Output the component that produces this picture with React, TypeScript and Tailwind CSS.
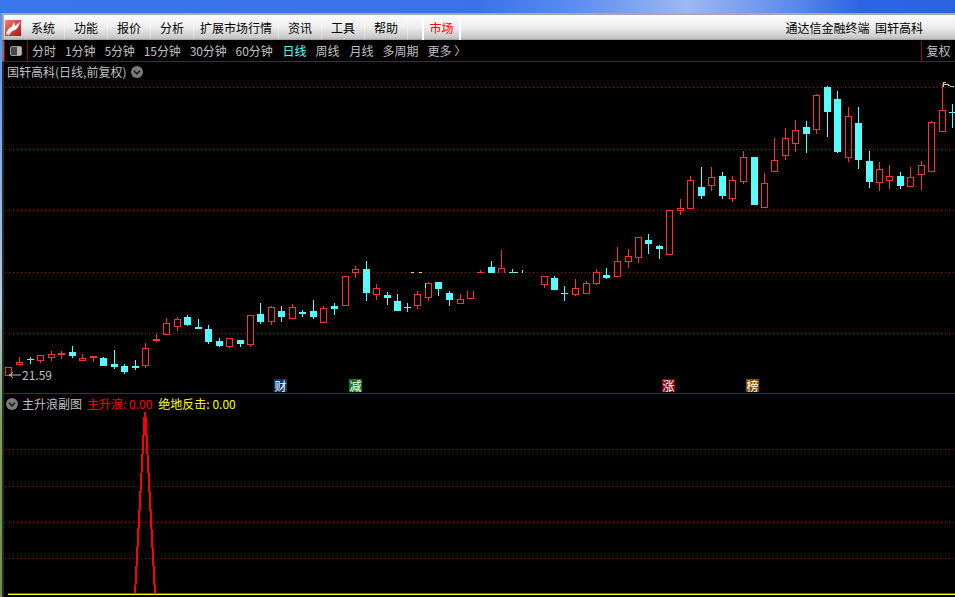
const RED = '#ff3232';
const CYAN = '#54ffff';
const GRID = '#a01010';

const MENU = ['系统', '功能', '报价', '分析', '扩展市场行情', '资讯', '工具', '帮助'];
const PERIODS = ['分时', '1分钟', '5分钟', '15分钟', '30分钟', '60分钟', '日线', '周线', '月线', '多周期', '更多 〉'];

type Candle = [number, number, number, number, number, 'r' | 'c'];

// x, high, low, body top, body bottom, colour (page coordinates)
const CANDLES: Candle[] = [
  [8, 367, 376, 367, 376, 'r'],
  [19, 357, 365, 362, 365, 'r'],
  [30, 357, 364, 359, 360, 'c'],
  [40, 355, 363, 355, 361, 'r'],
  [51, 351, 361, 354, 358, 'r'],
  [61, 351, 359, 353, 354, 'r'],
  [72, 346, 358, 352, 356, 'c'],
  [82, 354, 361, 358, 361, 'r'],
  [93, 356, 362, 356, 358, 'r'],
  [103, 357, 366, 358, 366, 'c'],
  [114, 350, 369, 364, 367, 'c'],
  [124, 364, 374, 366, 372, 'c'],
  [135, 360, 370, 366, 368, 'c'],
  [145, 343, 368, 348, 366, 'r'],
  [156, 334, 342, 339, 341, 'r'],
  [166, 318, 335, 323, 335, 'r'],
  [177, 317, 331, 319, 327, 'r'],
  [187, 315, 326, 317, 325, 'c'],
  [198, 319, 329, 327, 329, 'c'],
  [208, 325, 344, 329, 342, 'c'],
  [219, 338, 347, 341, 346, 'c'],
  [229, 338, 348, 338, 347, 'r'],
  [240, 340, 347, 340, 344, 'c'],
  [250, 315, 347, 315, 345, 'r'],
  [260, 303, 324, 314, 322, 'c'],
  [271, 306, 325, 307, 322, 'r'],
  [281, 306, 322, 311, 317, 'c'],
  [292, 304, 319, 307, 319, 'r'],
  [302, 310, 317, 312, 314, 'c'],
  [313, 300, 319, 311, 317, 'c'],
  [323, 306, 323, 308, 323, 'r'],
  [334, 303, 315, 306, 309, 'c'],
  [345, 276, 306, 276, 306, 'r'],
  [355, 266, 278, 269, 273, 'r'],
  [366, 261, 301, 269, 293, 'c'],
  [376, 284, 300, 288, 295, 'r'],
  [387, 292, 305, 295, 298, 'c'],
  [397, 294, 311, 301, 311, 'c'],
  [407, 303, 312, 307, 308, 'c'],
  [417, 291, 309, 294, 306, 'r'],
  [428, 282, 301, 283, 298, 'r'],
  [438, 282, 296, 282, 289, 'c'],
  [449, 291, 306, 293, 300, 'c'],
  [460, 294, 304, 299, 304, 'r'],
  [491, 261, 273, 267, 273, 'c'],
  [544, 276, 288, 276, 285, 'r'],
  [554, 276, 290, 278, 290, 'c'],
  [564, 286, 301, 293, 294, 'c'],
  [575, 279, 296, 288, 295, 'r'],
  [586, 281, 294, 283, 294, 'r'],
  [596, 269, 285, 272, 284, 'r'],
  [606, 268, 279, 275, 278, 'c'],
  [617, 247, 277, 261, 277, 'r'],
  [628, 249, 268, 256, 262, 'r'],
  [638, 237, 263, 237, 258, 'r'],
  [648, 234, 254, 240, 244, 'c'],
  [659, 245, 259, 246, 249, 'c'],
  [669, 210, 255, 210, 255, 'r'],
  [680, 199, 215, 208, 211, 'r'],
  [690, 176, 209, 180, 209, 'r'],
  [701, 167, 199, 187, 196, 'c'],
  [711, 167, 191, 177, 186, 'r'],
  [722, 172, 199, 176, 196, 'c'],
  [732, 176, 202, 180, 199, 'r'],
  [743, 151, 184, 157, 182, 'r'],
  [754, 157, 205, 157, 205, 'c'],
  [764, 173, 208, 183, 208, 'r'],
  [774, 138, 172, 160, 172, 'r'],
  [785, 128, 160, 138, 156, 'r'],
  [795, 120, 152, 130, 144, 'r'],
  [806, 121, 153, 127, 134, 'c'],
  [816, 94, 134, 95, 130, 'r'],
  [827, 86, 137, 87, 112, 'c'],
  [837, 91, 153, 99, 152, 'c'],
  [848, 107, 162, 116, 158, 'r'],
  [858, 107, 169, 123, 160, 'c'],
  [869, 151, 188, 161, 182, 'c'],
  [879, 162, 191, 169, 183, 'r'],
  [889, 165, 189, 176, 181, 'r'],
  [900, 172, 189, 176, 186, 'c'],
  [910, 167, 187, 177, 187, 'r'],
  [921, 161, 190, 165, 175, 'r'],
  [931, 121, 172, 122, 172, 'r'],
  [942, 84, 132, 110, 132, 'r'],
  [952, 104, 128, 112, 113, 'c'],
];

const TAGS = [
  { label: '财', left: 'left-[270px]', bg: 'bg-[#0f3a6b]' },
  { label: '减', left: 'left-[345px]', bg: 'bg-[#0a7a14]' },
  { label: '涨', left: 'left-[658px]', bg: 'bg-[#8b0010]' },
  { label: '榜', left: 'left-[742px]', bg: 'bg-[#8a4a00]' },
];

function CandleMark({ c }: { c: Candle }) {
  const [x, hi, lo, top, bottom, kind] = c;
  const mid = x + 0.5;
  if (kind === 'c') {
    return (
      <g>
        <line x1={mid} x2={mid} y1={hi} y2={lo} stroke={CYAN} />
        <rect x={x - 3} y={top} width={7} height={Math.max(bottom - top, 1)} fill={CYAN} />
      </g>
    );
  }
  return (
    <g stroke={RED} fill="none">
      <line x1={mid} x2={mid} y1={hi} y2={top} />
      <line x1={mid} x2={mid} y1={bottom} y2={lo} />
      <rect x={x - 2.5} y={top + 0.5} width={6} height={Math.max(bottom - top - 1, 1)} strokeWidth={1.3} />
    </g>
  );
}

function GridLine({ y }: { y: number }) {
  return <line x1={5} x2={955} y1={y + 0.5} y2={y + 0.5} stroke={GRID} strokeDasharray="1 3" />;
}

function ChevronDot() {
  return (
    <svg viewBox="0 0 12 12" className="h-3 w-3 shrink-0">
      <circle cx="6" cy="6" r="6" fill="#7a7a7a" />
      <path d="M3 4.8 6 7.8 9 4.8" fill="none" stroke="#1a1a1a" strokeWidth="1.6" />
    </svg>
  );
}

function Logo() {
  return (
    <svg viewBox="0 0 16 16" className="h-4 w-4">
      <defs>
        <linearGradient id="logoBg" x1="0" y1="0" x2="1" y2="1">
          <stop offset="0" stopColor="#f08078" />
          <stop offset="1" stopColor="#b80f14" />
        </linearGradient>
      </defs>
      <rect width="16" height="16" fill="url(#logoBg)" />
      <path d="M1 14C2.500 9.500 4.500 7.500 7 6.500L9 2 10 6 15 2C14 6.500 12 9.500 8.500 10.500L6.500 11.500 4 15Z" fill="#fff" />
    </svg>
  );
}

function MainChart() {
  return (
    <div className="relative h-[331px]">
      <svg viewBox="4 62 951 331" className="block h-[331px] w-[951px]" shapeRendering="crispEdges">
        {[87, 149, 210, 272, 333].map((y) => (
          <GridLine key={y} y={y} />
        ))}
        {CANDLES.map((c) => (
          <CandleMark key={c[0]} c={c} />
        ))}
        {/* candles cut by the redraw around the 272 line */}
        <path d="M467.5 291V298.5H473.5V291" fill="none" stroke={RED} strokeWidth={1.3} />
        <path d="M498.5 273V268.5H504.5V273M501.5 250V268" fill="none" stroke={RED} strokeWidth={1.3} />
        <path d="M477 272.5H484M480.5 270V272" fill="none" stroke={RED} />
        <path d="M509 272.5H515M512.5 269V272M522.5 270V273" fill="none" stroke={CYAN} />
        <path d="M411 272.5H414M419 272.5H422M515 272.5H518" fill="none" stroke="#ffe000" />
        <path d="M425.5 283V288" fill="none" stroke="#ffe000" />
        <path d="M943 87V82H946M944 84H947L950 86L954 87" fill="none" stroke="#c8c8c8" />
      </svg>

      <div className="absolute left-[3px] top-[2px] flex items-center gap-[5px] text-[12px] leading-[16px] text-[#c0c0c0]">
        <span>国轩高科(日线,前复权)</span>
        <ChevronDot />
      </div>

      <div className="absolute left-[4px] top-[306px] flex items-center text-[12px] leading-[14px] text-[#c0c0c0]">
        <svg viewBox="0 0 14 8" className="h-2 w-[14px]">
          <path d="M13 4H1M5 1 1.500 4 5 7" fill="none" stroke="#c0c0c0" />
        </svg>
        <span>21.59</span>
      </div>

      {TAGS.map((t) => (
        <span
          key={t.label}
          className={`absolute top-[317px] flex h-[13px] w-[13px] items-center justify-center text-[12px] leading-none text-white ${t.left} ${t.bg}`}
        >
          {t.label}
        </span>
      ))}
    </div>
  );
}

function SubChart() {
  return (
    <div className="relative h-[203px]">
      <svg viewBox="4 394 951 203" className="block h-[203px] w-[951px]" shapeRendering="crispEdges">
        {[449, 486, 522, 558].map((y) => (
          <GridLine key={y} y={y} />
        ))}
        <polyline points="135,594 144.700,413 145.300,413 155,594" fill="none" stroke="#ff0000" strokeWidth={2} />
        <line x1={8} x2={955} y1={593.5} y2={593.5} stroke="#ff2000" />
        <line x1={8} x2={955} y1={594.5} y2={594.5} stroke="#ffff00" />
      </svg>
      <div className="absolute left-[2px] top-[2px] flex items-center text-[12px] leading-[16px]">
        <ChevronDot />
        <span className="ml-[4px] text-[#c0c0c0]">主升浪副图</span>
        <span className="ml-[5px] text-[#ff0000]">主升浪: 0.00</span>
        <span className="ml-[6px] text-[#ffff00]">绝地反击: 0.00</span>
      </div>
    </div>
  );
}

export default function App() {
  return (
    <div className="flex h-[597px] w-[955px] flex-col overflow-hidden bg-black font-['Noto_Sans_CJK_SC','Noto_Sans',sans-serif]">
      {/* desktop title strip */}
      <div className="h-[13px] shrink-0 bg-[linear-gradient(to_right,#3a76ee_0%,#3b72ea_50%,#5a8cf0_60%,#9db8f2_72%,#6f97ee_80%,#2d66e4_90%,#2a62e0_100%)]" />

      <div className="flex min-h-0 flex-1">
        <div className="w-[2px] shrink-0 bg-[linear-gradient(to_bottom,#5b8fe8,#b6cde0_50%,#7f9f5f_70%,#6f8f4f)]" />
        <div className="flex w-[953px] flex-col">
          {/* menu bar */}
          <div className="border-b-[1px] border-l-2 border-t-2 border-b-black border-l-[#a8a8a8] border-t-[#a8a8a8]">
            <div className="flex h-[25px] items-center bg-[linear-gradient(to_bottom,#fdfdfd,#ececec_50%,#c6c6c6_92%,#9a9a9a)] text-[12px] text-black">
              <div className="ml-px mr-[1px] flex w-[16px] items-center">
                <Logo />
              </div>
              {MENU.map((item) => (
                <span
                  key={item}
                  className={`flex h-full items-center border-r border-white/30 ${item.length > 2 ? 'px-[6px]' : 'pl-[9px] pr-[9px]'}`}
                >
                  {item}
                </span>
              ))}
              <span className="ml-[14px] flex h-full w-[39px] items-center justify-center border-x-[2px] border-white text-[#ff0000]">
                市场
              </span>
              <span className="ml-auto mr-[32px] whitespace-pre">通达信金融终端  国轩高科</span>
            </div>
          </div>

          {/* period toolbar */}
          <div className="flex h-[21px] items-stretch border-b border-l-2 border-b-[#a00000] border-l-[#777] bg-black text-[12px] text-[#c0c0c0]">
            <div className="flex w-[24px] items-center justify-center border-x border-[#a00000]">
              <svg viewBox="0 0 12 10" className="h-[10px] w-3">
                <rect x="0.500" y="0.500" width="11" height="9" rx="1.500" fill="#4a4a4a" stroke="#9a9a9a" />
                <rect x="7" y="1" width="4" height="8" fill="#b8b8b8" />
              </svg>
            </div>
            <div className="ml-[4px] flex items-center gap-[9px]">
              {PERIODS.map((p) => (
                <span
                  key={p}
                  className={
                    p === '日线'
                      ? 'ml-px text-[#54ffff]'
                      : p === '月线'
                        ? 'ml-px'
                        : p.includes('分钟')
                          ? 'tracking-[-0.1px]'
                          : ''
                  }
                >
                  {p}
                </span>
              ))}
            </div>
            <div className="ml-auto flex w-[34px] items-center justify-center border-l border-[#a00000]">复权</div>
          </div>

          {/* charts */}
          <div className="border-l-2 border-[#2a2a2a]">
            <MainChart />
            <div className="h-px bg-[#a00000]" />
            <SubChart />
          </div>
        </div>
      </div>
    </div>
  );
}
